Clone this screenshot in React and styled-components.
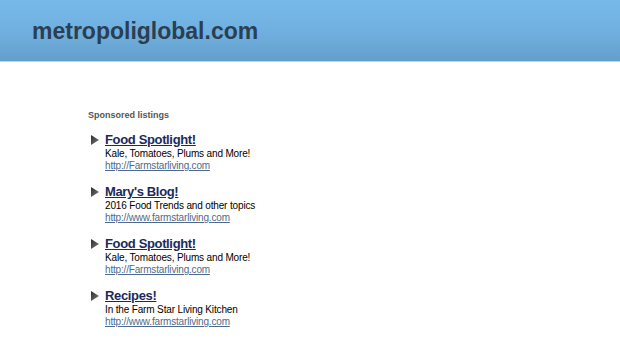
import React from 'react';
import styled, { createGlobalStyle } from 'styled-components';

const GlobalStyle = createGlobalStyle`
    html, body {
        margin: 0;
        padding: 0;
        background: #ffffff;
        font-family: "Liberation Sans", Arial, sans-serif;
    }
`

const Header = styled.div`
    height: 62px;
    background: linear-gradient(to bottom, #77bae9 0%, #70b0e0 50%, #649fcb 100%);
    border-bottom: 1px solid #b3d5f2;
    box-sizing: border-box;
    padding: 17px 0 0 32px;
`
const Domain = styled.h1`
    margin: 0;
    font-size: 23px;
    line-height: 28px;
    font-weight: 700;
    color: #2a3f52;
`
const Listings = styled.div`
    margin: 48px 0 0 88px;
`
const Heading = styled.div`
    font-size: 9px;
    line-height: 11px;
    font-weight: 700;
    color: #555555;
    margin-bottom: 11px;
`
const List = styled.div`
    display: flex;
    flex-direction: column;
    gap: 13px;
`
const Item = styled.div`
    display: flex;
    align-items: flex-start;
`
const Arrow = styled.svg`
    width: 8px;
    height: 10px;
    margin: 3px 6px 0 3px;
    flex-shrink: 0;
`
const Text = styled.div`
    display: flex;
    flex-direction: column;
`
const Title = styled.a`
    font-size: 13px;
    line-height: 16px;
    font-weight: 700;
    letter-spacing: -0.35px;
    color: #1b2a5b;
    text-decoration: underline;
`
const Desc = styled.span`
    font-size: 10px;
    line-height: 12px;
    letter-spacing: -0.15px;
    color: #000000;
`
const Url = styled.a`
    font-size: 10px;
    line-height: 11px;
    letter-spacing: -0.18px;
    color: #4d6a8e;
    text-decoration: underline;
`

const items = [
    { title: 'Food Spotlight!', desc: 'Kale, Tomatoes, Plums and More!', url: 'http://Farmstarliving.com' },
    { title: "Mary's Blog!", desc: '2016 Food Trends and other topics', url: 'http://www.farmstarliving.com' },
    { title: 'Food Spotlight!', desc: 'Kale, Tomatoes, Plums and More!', url: 'http://Farmstarliving.com' },
    { title: 'Recipes!', desc: 'In the Farm Star Living Kitchen', url: 'http://www.farmstarliving.com' },
]

const Triangle = ({ id }) => (
    <Arrow viewBox="0 0 8 10">
        <defs>
            <linearGradient id={id} x1="0" y1="0" x2="1" y2="1">
                <stop offset="0" stopColor="#2c2c2c" />
                <stop offset="1" stopColor="#7d7d7d" />
            </linearGradient>
        </defs>
        <polygon points="0,0 8,5 0,10" fill={`url(#${id})`} />
    </Arrow>
)

const App = () => {
  return (
      <>
          <GlobalStyle />
          <Header>
              <Domain>metropoliglobal.com</Domain>
          </Header>
          <Listings>
              <Heading>Sponsored listings</Heading>
              <List>
                  {items.map((it, i) => (
                      <Item key={i}>
                          <Triangle id={`tri${i}`} />
                          <Text>
                              <Title href="#">{it.title}</Title>
                              <Desc>{it.desc}</Desc>
                              <Url href="#">{it.url}</Url>
                          </Text>
                      </Item>
                  ))}
              </List>
          </Listings>
      </>
  )
};

export default App;
